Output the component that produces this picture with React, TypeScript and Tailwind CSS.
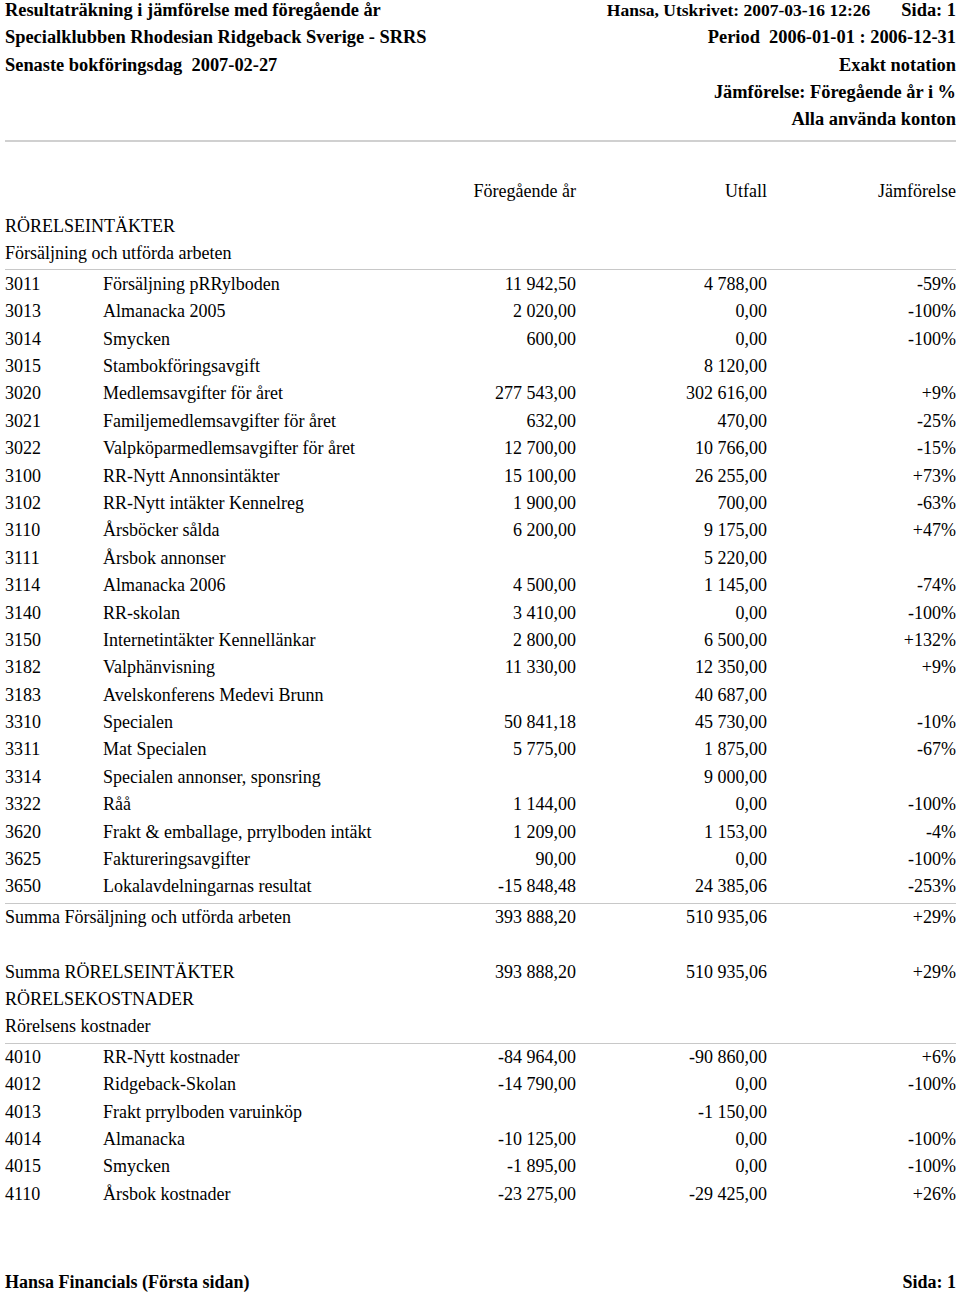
const rows1: [string, string, string, string, string][] = [
  ["3011", "Försäljning pRRylboden", "11 942,50", "4 788,00", "-59%"],
  ["3013", "Almanacka 2005", "2 020,00", "0,00", "-100%"],
  ["3014", "Smycken", "600,00", "0,00", "-100%"],
  ["3015", "Stambokföringsavgift", "", "8 120,00", ""],
  ["3020", "Medlemsavgifter för året", "277 543,00", "302 616,00", "+9%"],
  ["3021", "Familjemedlemsavgifter för året", "632,00", "470,00", "-25%"],
  ["3022", "Valpköparmedlemsavgifter för året", "12 700,00", "10 766,00", "-15%"],
  ["3100", "RR-Nytt Annonsintäkter", "15 100,00", "26 255,00", "+73%"],
  ["3102", "RR-Nytt intäkter Kennelreg", "1 900,00", "700,00", "-63%"],
  ["3110", "Årsböcker sålda", "6 200,00", "9 175,00", "+47%"],
  ["3111", "Årsbok annonser", "", "5 220,00", ""],
  ["3114", "Almanacka 2006", "4 500,00", "1 145,00", "-74%"],
  ["3140", "RR-skolan", "3 410,00", "0,00", "-100%"],
  ["3150", "Internetintäkter Kennellänkar", "2 800,00", "6 500,00", "+132%"],
  ["3182", "Valphänvisning", "11 330,00", "12 350,00", "+9%"],
  ["3183", "Avelskonferens Medevi Brunn", "", "40 687,00", ""],
  ["3310", "Specialen", "50 841,18", "45 730,00", "-10%"],
  ["3311", "Mat Specialen", "5 775,00", "1 875,00", "-67%"],
  ["3314", "Specialen annonser, sponsring", "", "9 000,00", ""],
  ["3322", "Råå", "1 144,00", "0,00", "-100%"],
  ["3620", "Frakt & emballage, prrylboden intäkt", "1 209,00", "1 153,00", "-4%"],
  ["3625", "Faktureringsavgifter", "90,00", "0,00", "-100%"],
  ["3650", "Lokalavdelningarnas resultat", "-15 848,48", "24 385,06", "-253%"],
];

const rows2: [string, string, string, string, string][] = [
  ["4010", "RR-Nytt kostnader", "-84 964,00", "-90 860,00", "+6%"],
  ["4012", "Ridgeback-Skolan", "-14 790,00", "0,00", "-100%"],
  ["4013", "Frakt prrylboden varuinköp", "", "-1 150,00", ""],
  ["4014", "Almanacka", "-10 125,00", "0,00", "-100%"],
  ["4015", "Smycken", "-1 895,00", "0,00", "-100%"],
  ["4110", "Årsbok kostnader", "-23 275,00", "-29 425,00", "+26%"],
];

function Row({ code, name, prev, out, cmp }: { code: string; name: string; prev: string; out: string; cmp: string }) {
  return (
    <div className="flex h-[27.4px] items-center">
      <div className="w-[98px]">{code}</div>
      <div className="flex-1">{name}</div>
      <div className="w-[200px] text-right">{prev}</div>
      <div className="w-[191px] text-right">{out}</div>
      <div className="w-[189px] text-right">{cmp}</div>
    </div>
  );
}

function SumRow({ label, prev, out, cmp }: { label: string; prev: string; out: string; cmp: string }) {
  return (
    <div className="flex h-[27.4px] items-center">
      <div className="flex-1">{label}</div>
      <div className="w-[200px] text-right">{prev}</div>
      <div className="w-[191px] text-right">{out}</div>
      <div className="w-[189px] text-right">{cmp}</div>
    </div>
  );
}

export default function App() {
  return (
    <div className="h-[1294px] w-[960px] overflow-hidden bg-white pl-[5px] pr-[4px] font-['Liberation_Serif',serif] text-[18px] text-black">
      {/* report header */}
      <div className="-mt-[3px] flex justify-between text-[18.4px] font-bold leading-[27.3px]">
        <div>
          <div>Resultaträkning i jämförelse med föregående år</div>
          <div>Specialklubben Rhodesian Ridgeback Sverige - SRRS</div>
          <div>Senaste bokföringsdag&nbsp; 2007-02-27</div>
        </div>
        <div className="text-right">
          <div>
            <span className="text-[17.5px]">Hansa, Utskrivet: 2007-03-16 12:26</span>
            <span className="ml-[31px]">Sida: 1</span>
          </div>
          <div>Period&nbsp; 2006-01-01 : 2006-12-31</div>
          <div>Exakt notation</div>
          <div>Jämförelse: Föregående år i %</div>
          <div>Alla använda konton</div>
        </div>
      </div>
      <div className="mt-[7px] border-t-2 border-[#d0d0d0]" />

      <div className="mt-[35px] flex h-[27.4px] items-center">
        <div className="flex-1" />
        <div className="w-[200px] text-right">Föregående år</div>
        <div className="w-[191px] text-right">Utfall</div>
        <div className="w-[189px] text-right">Jämförelse</div>
      </div>

      <div className="mt-[8px] flex h-[27.4px] items-center">RÖRELSEINTÄKTER</div>
      <div className="flex h-[27.4px] items-center">Försäljning och utförda arbeten</div>
      <div className="mt-[1px] mb-[1px] border-t border-[#c8c8c8]" />
      {rows1.map((r) => (
        <Row key={r[0]} code={r[0]} name={r[1]} prev={r[2]} out={r[3]} cmp={r[4]} />
      ))}
      <div className="mt-[2px] border-t border-[#c8c8c8]" />
      <SumRow label="Summa Försäljning och utförda arbeten" prev="393 888,20" out="510 935,06" cmp="+29%" />
      <div className="h-[27.4px]" />
      <SumRow label="Summa RÖRELSEINTÄKTER" prev="393 888,20" out="510 935,06" cmp="+29%" />
      <div className="flex h-[27.4px] items-center">RÖRELSEKOSTNADER</div>
      <div className="flex h-[27.4px] items-center">Rörelsens kostnader</div>
      <div className="mt-[2px] border-t border-[#c8c8c8]" />
      {rows2.map((r) => (
        <Row key={r[0]} code={r[0]} name={r[1]} prev={r[2]} out={r[3]} cmp={r[4]} />
      ))}

      {/* footer */}
      <div className="mt-[62px] flex justify-between text-[18px] font-bold leading-[25px]">
        <div>Hansa Financials (Första sidan)</div>
        <div>Sida: 1</div>
      </div>
    </div>
  );
}
